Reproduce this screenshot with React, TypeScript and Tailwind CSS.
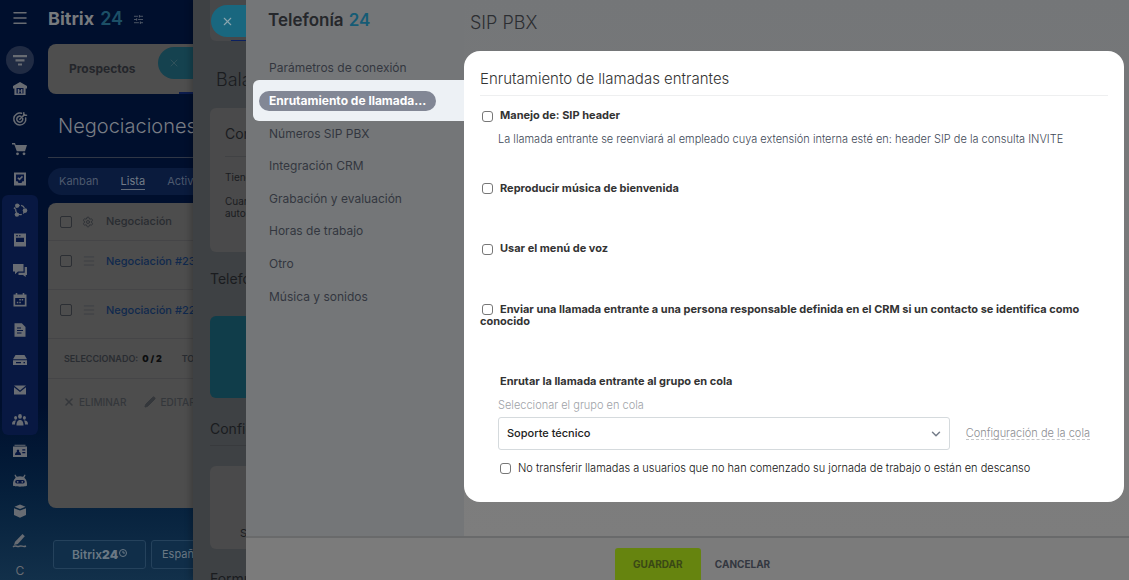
import type { ReactNode } from "react";
import { ChevronDown, Menu, Pencil, Settings, SlidersHorizontal, X } from "lucide-react";

const FONT = "font-[Inter,'Liberation_Sans',sans-serif]";

function Icon({ children }: { children: ReactNode }) {
  return (
    <svg viewBox="0 0 16 16" width="16" height="16" fill="currentColor" aria-hidden="true">
      {children}
    </svg>
  );
}

const HOLE = "#051540";

// Top of the rail: general tools
const TOP_ICONS: { label: string; icon: ReactNode }[] = [
  {
    label: "Inicio",
    icon: (
      <Icon>
        <path d="M8 1 1 5v2.4h1.4V14h11.2V7.400H15V5z" />
        <path d="M4.500 7h7v5.500h-7z" fill={HOLE} />
        <path d="M5.800 8h1.400v4.500H5.800zM9 8h1.400v4.500H9zM7 9.500h2v1H7z" />
      </Icon>
    ),
  },
  {
    label: "Objetivos",
    icon: (
      <Icon>
        <g fill="none" stroke="currentColor" strokeWidth="1.500" strokeLinecap="round">
          <path d="M9.500 2.300A6 6 0 1 0 13.700 7" />
          <path d="M9 5.400A3 3 0 1 0 10.700 7.500" />
          <path d="M7.800 8.300 12.500 3.600M11.800 4.300V1.800M11.800 4.300h2.700" />
        </g>
      </Icon>
    ),
  },
  {
    label: "Tienda",
    icon: (
      <Icon>
        <path d="M0 2h3l.7 1.900H15l-2 6.300H4.800L2.300 3.500H0z" />
        <circle cx="5.500" cy="12.800" r="1.400" />
        <circle cx="12" cy="12.800" r="1.400" />
      </Icon>
    ),
  },
  {
    label: "Tareas",
    icon: (
      <Icon>
        <path d="M2 1.500h12v13H2z" />
        <path d="M4 3.500h8v6.800h-1.600L9.500 12h-3l-.9-1.700H4z" fill={HOLE} />
        <path d="m5.800 6.700 1.700 1.700 3-3" fill="none" stroke="currentColor" strokeWidth="1.500" />
      </Icon>
    ),
  },
];

// CRM group, drawn on its own tinted plate
const GROUP_ICONS: { label: string; icon: ReactNode }[] = [
  {
    label: "CRM",
    icon: (
      <Icon>
        <circle cx="8.300" cy="8" r="4.600" fill="none" stroke="currentColor" strokeWidth="1.300" strokeDasharray="4 1.500" />
        <circle cx="5.200" cy="3.600" r="2.200" />
        <circle cx="13" cy="8.600" r="2.300" />
        <circle cx="4.900" cy="12.600" r="2.200" />
        <circle cx="2.700" cy="6.300" r="1" />
      </Icon>
    ),
  },
  {
    label: "Noticias",
    icon: (
      <Icon>
        <path d="M2 1.500h12v13H2z" />
        <path d="M4 5.800h8V10H4zM4 3.200h2v1H4zM7 3.200h1.500v1H7z" fill={HOLE} />
      </Icon>
    ),
  },
  {
    label: "Chat",
    icon: (
      <Icon>
        <path d="M1 2h10.500v7.500H6L3 12.300V9.500H1z" />
        <path d="M12.700 5H15v8h-1.300v2L11 13H6.500v-2.200h6.200z" />
      </Icon>
    ),
  },
  {
    label: "Calendario",
    icon: (
      <Icon>
        <path d="M1.500 2.500h2.200V1h1.600v1.500h5.400V1h1.600v1.500h2.200v12h-13z" />
        <path d="M3.200 6h9.600v6.800H3.200z" fill={HOLE} />
        <path d="M7.300 7h1.500v1.500H7.300zM9.700 7h1.500v1.500H9.700zM4.800 9.700h1.500v1.500H4.800zM7.300 9.700h1.500v1.500H7.300z" />
      </Icon>
    ),
  },
  {
    label: "Documentos",
    icon: (
      <Icon>
        <path d="M2.500 1.200h7.300l3.700 3.700v9.900h-11z" />
        <path d="M5 5.500h4v1.100H5zM5 8h6v1.100H5zM5 10.500h4.500v1.100H5z" fill={HOLE} />
      </Icon>
    ),
  },
  {
    label: "Disco",
    icon: (
      <Icon>
        <path d="M3.500 3h9L15 7.300H1zM1 8.300h14V13H1z" />
        <path d="M4 10h5v1.200H4zM11.500 10H13v1.200h-1.500z" fill={HOLE} />
      </Icon>
    ),
  },
  {
    label: "Correo",
    icon: (
      <Icon>
        <path d="M2 3.500h12L8 8.500z" />
        <path d="M2 5.200 8 10l6-4.800V12.500H2z" />
      </Icon>
    ),
  },
  {
    label: "Grupos",
    icon: (
      <Icon>
        <ellipse cx="8" cy="4.400" rx="1.900" ry="2.300" />
        <ellipse cx="3.600" cy="5.800" rx="1.500" ry="1.900" />
        <ellipse cx="12.400" cy="5.800" rx="1.500" ry="1.900" />
        <path d="M4.500 13.500c0-4 1.500-5.500 3.500-5.500s3.500 1.500 3.500 5.500zM0 12.500c0-3 1.200-4 3-4h1.200c-.8 1-1.200 2.200-1.200 4zM16 12.500c0-3-1.200-4-3-4h-1.200c.8 1 1.200 2.200 1.200 4z" />
      </Icon>
    ),
  },
];

const BOTTOM_ICONS: { label: string; icon: ReactNode }[] = [
  {
    label: "Contactos",
    icon: (
      <Icon>
        <path d="M1 3.500h14V14H1zM2.500 1.800h11v1h-11z" />
        <path d="M3 12c0-2 1-2.600 2-2.900-1.500-3.600 3.500-3.600 2 0 1 .3 2 .9 2 2.900zM10.300 6.200h3v1.300h-3zM10.300 9h3v1.300h-3z" fill={HOLE} />
      </Icon>
    ),
  },
  {
    label: "Robots",
    icon: (
      <Icon>
        <path d="m3.300 1.500 1.600 2.300a8 8 0 0 1 6.200 0l1.600-2.300.9.600-1.300 2.600C14.500 6.300 15.200 9 15 12.500c-.3 1.500-13.700 1.500-14 0C.8 9 1.500 6.300 3.700 4.700L2.400 2.100z" />
        <rect x="3.200" y="7" width="9.600" height="3.600" rx="1.800" fill={HOLE} />
        <circle cx="5.700" cy="8.800" r=".9" />
        <circle cx="10.300" cy="8.800" r=".9" />
      </Icon>
    ),
  },
  {
    label: "Inventario",
    icon: (
      <Icon>
        <path d="m8 1.500 5.500 2.300L8 6 2.500 3.800z" />
        <path d="M2 5.200 8 7.600l6-2.400v6.900l-6 2.700-6-2.700z" />
      </Icon>
    ),
  },
  {
    label: "Firma",
    icon: (
      <Icon>
        <path d="m10.500 1 2.300 2.200-7 7.800-3.800 1 1-3.300z" />
        <path d="M1 13.800c3-2.500 4 1 6.500-.6 2-1.200 3.500 1.300 6.500-.2" fill="none" stroke="currentColor" strokeWidth="1.500" />
      </Icon>
    ),
  },
];

function RailButton({ label, icon }: { label: string; icon: ReactNode }) {
  return (
    <button type="button" aria-label={label} className="flex h-[30px] w-9 shrink-0 items-center justify-center">
      {icon}
    </button>
  );
}

function Rail() {
  return (
    <nav aria-label="Menú principal" className="flex w-10 shrink-0 flex-col items-center text-[#686c73]">
      <button type="button" aria-label="Abrir menú" className="flex h-9 shrink-0 items-center">
        <Menu size={18} strokeWidth={2} />
      </button>
      <button
        type="button"
        aria-label="Filtrar"
        className="mt-2.5 flex size-7 shrink-0 items-center justify-center rounded-full bg-[#202b43]"
      >
        <Icon>
          <path d="M1 3h14v2.200H1zM3.500 7.200h9v2.200h-9zM6 11.400h4v2.200H6z" />
        </Icon>
      </button>
      {TOP_ICONS.map((item) => (
        <RailButton key={item.label} {...item} />
      ))}
      <div className="my-px shrink-0 rounded-md bg-[#081842]">
        {GROUP_ICONS.map((item) => (
          <RailButton key={item.label} {...item} />
        ))}
      </div>
      {BOTTOM_ICONS.map((item) => (
        <RailButton key={item.label} {...item} />
      ))}
      <RailButton label="Más" icon={<span className="text-xs">C</span>} />
    </nav>
  );
}

const BOX = "appearance-none rounded-[2px] border";

function DealsPage() {
  return (
    <main className="flex w-[153px] shrink-0 flex-col overflow-hidden pl-2 whitespace-nowrap">
      <header className="flex h-11 shrink-0 items-center gap-1.5 pb-1.5 text-lg font-bold text-[#777a7e]">
        Bitrix <span className="font-semibold text-[#1c4f66]">24</span>
        <SlidersHorizontal size={11} className="ml-1 text-[#525b69]" />
      </header>

      <div className="flex h-[50px] shrink-0 items-center justify-between rounded-l-lg bg-[#4e4e4e] pl-[21px] text-xs font-bold text-[#24262b]">
        Prospectos
        <div className="flex h-full flex-col items-end justify-between pt-[3px]">
          <button
            type="button"
            aria-label="Cerrar prospectos"
            className="flex h-8 w-[35px] items-center rounded-l-full bg-[#15424f] pl-2.5 text-[#30525b]"
          >
            <X size={12} />
          </button>
          <span className="h-0.5 w-3.5 bg-[#0c1c4d]" />
        </div>
      </div>

      <h1 className="flex h-16 shrink-0 items-center border-b border-[#303746] pl-2.5 text-xl font-light text-[#787c84]">
        Negociaciones
      </h1>

      <div className="mt-2.5 flex h-[27px] shrink-0 items-center gap-[22px] rounded-l-full bg-[#0a1b3d] pl-[11px] text-[11px] text-[#4d596d]">
        <a href="#kanban">Kanban</a>
        <a href="#lista" className="border-b border-[#626b79] text-[#727b88]">
          Lista
        </a>
        <a href="#actividades">Actividades</a>
      </div>

      <section className="mt-2 flex h-[305px] shrink-0 flex-col rounded-l-lg bg-[#4d4d4d] text-[#292c31]">
        <div className="flex h-[38px] items-center gap-2.5 border-b border-[#454547] pl-3">
          <input type="checkbox" aria-label="Seleccionar todo" className={`${BOX} size-3 border-[#2c2f34]`} />
          <Settings size={12} className="text-[#303338]" />
          <span className="ml-0.5 text-[11px] font-medium">Negociación</span>
        </div>
        {["Negociación #23", "Negociación #22"].map((name) => (
          <div key={name} className="flex h-[49px] items-center gap-2.5 border-b border-[#454547] pb-2 pl-3">
            <input type="checkbox" aria-label={name} className={`${BOX} size-3 shrink-0 border-[#2c2f34]`} />
            <Menu size={14} strokeWidth={1.5} className="shrink-0 text-[#3b3e43]" />
            <a href="#negociacion" className="text-[11px] font-medium text-[#10294d]">
              {name}
            </a>
          </div>
        ))}
        <p className="flex h-10 items-center gap-1 border-b border-[#454547] pl-4 text-[9px] font-semibold">
          SELECCIONADO: <b className="text-[#0c0d0f]">0 / 2</b>
          <span className="ml-4">TOTAL</span>
        </p>
        <div className="flex h-[46px] items-center pl-[15px] text-[10px] font-medium text-[#34373b]">
          <button type="button" className="flex items-center gap-1">
            <X size={12} strokeWidth={3} />
            ELIMINAR
          </button>
          <button type="button" className="ml-[18px] flex items-center gap-1">
            <Pencil size={12} fill="currentColor" />
            EDITAR
          </button>
        </div>
      </section>

      <footer className="mt-8 flex shrink-0 gap-[5px] pl-[5px]">
        <button
          type="button"
          className="flex h-[29px] w-[93px] shrink-0 items-center justify-center rounded-[3px] border border-[#25425c] bg-[#102e49] text-xs font-semibold text-[#6a7884]"
        >
          Bitrix<b>24</b>
          <svg viewBox="0 0 8 8" className="mb-1 ml-px size-2" fill="none" stroke="currentColor" aria-hidden="true">
            <circle cx="4" cy="4" r="3.500" />
            <path d="M4 2v2h2" />
          </svg>
        </button>
        <button
          type="button"
          className="h-[29px] shrink-0 rounded-[3px] border border-[#25425c] bg-[#102e49] px-2.5 text-[11px] text-[#6a7884]"
        >
          Español
        </button>
      </footer>
    </main>
  );
}

// Telephony overview, mostly hidden behind the settings panel
function BalancePanel() {
  return (
    <aside className="flex w-[53px] shrink-0 flex-col overflow-hidden bg-[#3e4144] pl-[17px] whitespace-nowrap text-[#1a1c1f] shadow-[-3px_0_6px_rgba(0,0,0,0.2)]">
      <div className="flex h-[41px] shrink-0 flex-col items-end justify-between rounded-bl-md bg-[#47484a] pt-[5px]">
        <button
          type="button"
          aria-label="Cerrar panel"
          className="flex h-8 w-[35px] items-center rounded-l-full bg-[#19677f] pl-2.5 text-[#8aa5af]"
        >
          <X size={13} />
        </button>
        <span className="h-px w-[15px] bg-[#0b2060]" />
      </div>
      <h2 className="flex h-[67px] shrink-0 items-center pt-2.5 pl-1.5 text-lg font-light">Balance</h2>
      <div className="h-36 shrink-0 rounded-l-md bg-[#4a4a4b] pl-[15px]">
        <h3 className="flex h-[49px] items-center border-b border-[#414244] pt-1 text-sm">Conexión</h3>
        <p className="pt-3 text-[10px] leading-4">Tiene</p>
        <p className="pt-2.5 text-[10px] leading-3">
          Cuando
          <br />
          automática
        </p>
      </div>
      <h3 className="flex h-16 shrink-0 items-center pb-2.5 text-sm">Telefonía</h3>
      <div className="h-[82px] shrink-0 rounded-l-md bg-[#103d4a]" />
      <h3 className="flex h-12 shrink-0 items-center border-b border-[#383a3d] pt-3.5 text-sm">Configurar</h3>
      <div className="mt-5 flex h-[83px] shrink-0 items-end rounded-l-md bg-[#4a4a4b] pb-2 pl-[30px] text-[11px]">
        SIP
      </div>
      <h3 className="mt-5 shrink-0 text-sm">Formularios</h3>
    </aside>
  );
}

const SETTINGS_NAV = [
  "Parámetros de conexión",
  "Enrutamiento de llamada...",
  "Números SIP PBX",
  "Integración CRM",
  "Grabación y evaluación",
  "Horas de trabajo",
  "Otro",
  "Música y sonidos",
];
const ACTIVE_INDEX = 1;

function SettingsNav() {
  return (
    <nav aria-label="Telefonía" className="w-[218px] shrink-0 bg-[#747678]">
      <h2 className="flex h-[52px] items-center gap-[5px] pb-2.5 pl-[22px] text-[17px] font-semibold text-[#25272b]">
        Telefonía <span className="text-[#155b75]">24</span>
      </h2>
      <ul className="grid h-[261px] auto-rows-fr text-xs text-[#33363f]">
        {SETTINGS_NAV.map((label, index) => (
          <li key={label} className="flex items-center">
            {index === ACTIVE_INDEX ? (
              <div className="-my-1 ml-[7px] flex h-[41px] grow items-center rounded-l-md bg-[#edf1f5] pl-1.5">
                <a
                  href="#seccion"
                  aria-current="page"
                  className="rounded-full bg-[#828795] px-2.5 leading-5 font-bold whitespace-nowrap text-white"
                >
                  {label}
                </a>
              </div>
            ) : (
              <a href="#seccion" className="pl-[23px]">
                {label}
              </a>
            )}
          </li>
        ))}
      </ul>
    </nav>
  );
}

function Option({ id, label }: { id: string; label: string }) {
  return (
    <div className="text-[11px] leading-3 font-bold">
      <input
        id={id}
        type="checkbox"
        className={`${BOX} mr-[7px] ml-0.5 size-[11px] rounded-[3px] border-[#777] bg-white align-middle`}
      />
      <label htmlFor={id}>{label}</label>
    </div>
  );
}

function RoutingCard() {
  return (
    <section className="mr-[5px] flex flex-col rounded-2xl bg-white px-4 pt-4 pb-7 text-[#333]">
      <h2 className="border-b border-[#eeeff0] pb-1 text-[15px] leading-6 font-light">
        Enrutamiento de llamadas entrantes
      </h2>
      <div className="mt-[13px]">
        <Option id="sip-header" label="Manejo de: SIP header" />
        <p className="mt-[9px] pl-[18px] text-[11px] leading-4 font-light text-[#414957]">
          La llamada entrante se reenviará al empleado cuya extensión interna esté en: header SIP de la consulta INVITE
        </p>
      </div>
      <div className="mt-[35px]">
        <Option id="welcome-music" label="Reproducir música de bienvenida" />
      </div>
      <div className="mt-12">
        <Option id="voice-menu" label="Usar el menú de voz" />
      </div>
      <div className="mt-12">
        <Option
          id="crm-owner"
          label="Enviar una llamada entrante a una persona responsable definida en el CRM si un contacto se identifica como conocido"
        />
      </div>
      <div className="mt-12 px-[18px]">
        <h3 className="pl-0.5 text-[11px] leading-3 font-bold">Enrutar la llamada entrante al grupo en cola</h3>
        <label htmlFor="queue" className="mt-2.5 block text-[11px] leading-4 font-light text-[#9ea2a7]">
          Seleccionar el grupo en cola
        </label>
        <div className="mt-1 flex items-center gap-4">
          <div className="relative grow">
            <select
              id="queue"
              className="h-[33px] w-full appearance-none rounded-[3px] border border-[#d5dadd] bg-white px-2 text-[11px] font-medium text-[#222]"
            >
              <option>Soporte técnico</option>
            </select>
            <ChevronDown
              size={14}
              strokeWidth={2.5}
              className="pointer-events-none absolute top-1/2 right-[7px] -translate-y-1/2 text-[#747c89]"
            />
          </div>
          <a
            href="#cola"
            className="border-b border-dashed border-[#c5c7c9] text-[11px] leading-3 font-light text-[#8b8e92]"
          >
            Configuración de la cola
          </a>
        </div>
        <div className="mt-3 flex items-center gap-[7px] pl-0.5 text-[11px] leading-3 font-light text-[#111]">
          <input
            id="no-transfer"
            type="checkbox"
            className={`${BOX} size-[11px] rounded-[3px] border-[#777] bg-white`}
          />
          <label htmlFor="no-transfer">
            No transferir llamadas a usuarios que no han comenzado su jornada de trabajo o están en descanso
          </label>
        </div>
      </div>
    </section>
  );
}

function SettingsPanel() {
  return (
    <div className="flex min-w-0 grow flex-col bg-[#747678]">
      <div className="flex min-h-0 grow">
        <SettingsNav />
        <div className="min-w-0 grow bg-gradient-to-b from-[#747678] to-[#7d7d7d]">
          <h1 className="flex h-[51px] items-center pb-1.5 pl-1.5 text-lg font-light text-[#2c2e32]">SIP PBX</h1>
          <RoutingCard />
        </div>
      </div>
      <footer className="flex h-[44px] shrink-0 items-end justify-center gap-3.5 border-t-2 border-[#696a6b] bg-[#7b7b7b] pl-2.5 text-[10px] font-bold">
        <button type="button" className="h-8 w-[86px] rounded-t-[3px] bg-[#66840f] text-[#3a4816]">
          GUARDAR
        </button>
        <button type="button" className="h-8 text-[#333740]">
          CANCELAR
        </button>
      </footer>
    </div>
  );
}

export default function App() {
  return (
    <div
      className={`flex h-screen overflow-hidden bg-gradient-to-b from-[#000f2d] from-70% to-[#12304a] ${FONT}`}
    >
      <Rail />
      <DealsPage />
      <BalancePanel />
      <SettingsPanel />
    </div>
  );
}
